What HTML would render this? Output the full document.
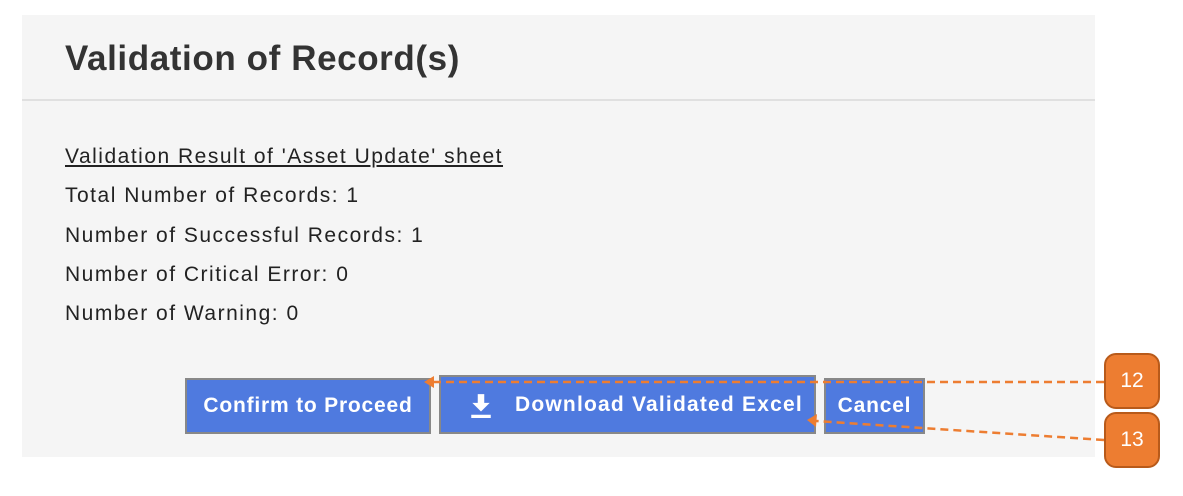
<!DOCTYPE html>
<html><head><style>
body{margin:0;width:1183px;height:496px;background:#fff;position:relative;overflow:hidden;font-family:"Liberation Sans",sans-serif;}
.panel{position:absolute;left:22px;top:15px;width:1073px;height:442px;background:#f5f5f5;}
.hdr{position:absolute;left:0;top:0;width:1073px;height:84px;border-bottom:2px solid #e0e0e0;}
h1{position:absolute;left:43px;top:24px;margin:0;font-size:35px;letter-spacing:0.6px;font-weight:bold;color:#333;}
.t{position:absolute;left:43px;font-size:21px;letter-spacing:1.5px;color:#222;}
.btn{position:absolute;background:#4f7adf;color:#fff;font-weight:bold;font-size:21px;letter-spacing:0.8px;border:2px solid #888;box-sizing:border-box;display:flex;align-items:center;justify-content:center;}
.tag{position:absolute;left:1104px;width:56px;height:56px;background:#ed7d31;border:2px solid #b85a1a;border-radius:12px;box-sizing:border-box;color:#fff;font-size:21px;display:flex;align-items:center;justify-content:center;}
</style></head><body>
<div class="panel">
<div class="hdr"><h1>Validation of Record(s)</h1></div>
<div class="t" style="top:130px;text-decoration:underline">Validation Result of 'Asset Update' sheet</div>
<div class="t" style="top:169px">Total Number of Records: 1</div>
<div class="t" style="top:209px">Number of Successful Records: 1</div>
<div class="t" style="top:248px">Number of Critical Error: 0</div>
<div class="t" style="top:287px">Number of Warning: 0</div>
</div>
<div class="btn" style="left:185px;top:378px;width:246px;height:56px">Confirm to Proceed</div>
<div class="btn" style="left:439px;top:375px;width:377px;height:59px;justify-content:flex-start;padding-left:28px;letter-spacing:1.2px"><svg width="24" height="26" viewBox="0 0 22 24" style="margin-right:22px"><path d="M8 2h6v8h5l-8 8-8-8h5z" fill="#fff"/><rect x="2" y="21" width="18" height="3" fill="#fff"/></svg>Download Validated Excel</div>
<div class="btn" style="left:824px;top:378px;width:101px;height:56px">Cancel</div>
<svg style="position:absolute;left:0;top:0" width="1183" height="496">
<line x1="1104" y1="382" x2="432" y2="382" stroke="#ed7d31" stroke-width="2.5" stroke-dasharray="8,5"/>
<path d="M424 382l10-6v12z" fill="#ed7d31"/>
<line x1="1104" y1="440" x2="816" y2="421" stroke="#ed7d31" stroke-width="2.5" stroke-dasharray="8,5"/>
<path d="M807 420l10-6-1 13z" fill="#ed7d31"/>
</svg>
<div class="tag" style="top:353px">12</div>
<div class="tag" style="top:412px">13</div>
</body></html>
